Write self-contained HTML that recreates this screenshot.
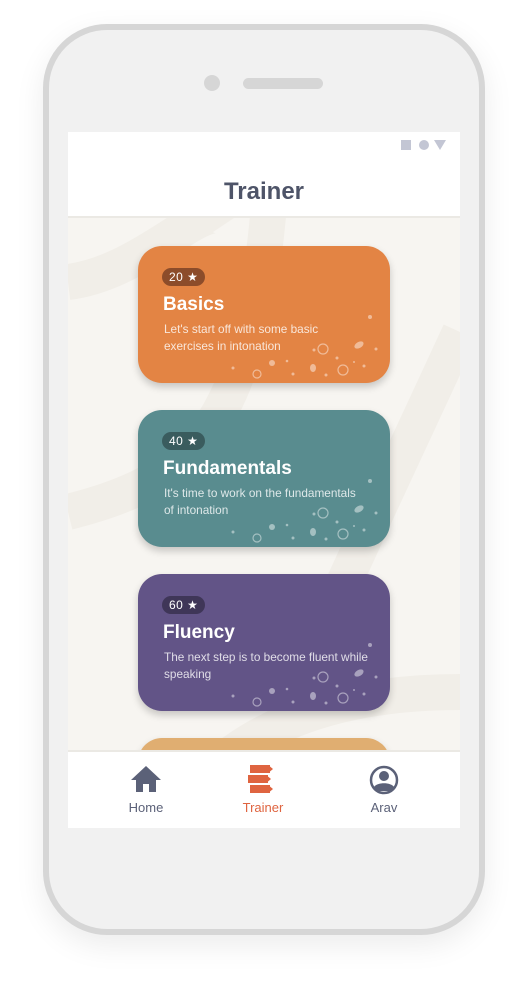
<!DOCTYPE html>
<html><head><style>
body{margin:0;width:528px;height:997px;background:#fff;position:relative;overflow:hidden;font-family:"Liberation Sans",sans-serif}
.phone{position:absolute;left:43px;top:24px;width:430px;height:899px;border:6px solid #d6d6d6;border-radius:64px;background:#f1f1f1;box-shadow:0 10px 30px rgba(0,0,0,.08)}
.cam{position:absolute;left:204px;top:75px;width:16px;height:16px;border-radius:50%;background:#d6d6d6}
.spk{position:absolute;left:243px;top:78px;width:80px;height:11px;border-radius:6px;background:#d6d6d6}
.screen{position:absolute;left:68px;top:132px;width:392px;height:696px;background:#f7f5f1;overflow:hidden}
.hdr{position:absolute;left:0;top:0;width:392px;height:84px;background:#fff;border-bottom:2px solid #ebe9e4}
.hdr h1{margin:0;position:absolute;top:46px;width:100%;text-align:center;font-size:24px;color:#4e5468;font-weight:bold}
.card{position:absolute;left:70px;width:252px;height:137px;border-radius:24px;color:#fff;box-shadow:0 4px 8px rgba(0,0,0,.2);overflow:hidden}
.badge{position:absolute;left:24px;top:22px;height:18px;padding:0 7px;border-radius:9px;font-size:12px;line-height:18px;letter-spacing:.5px}
.card h2{position:absolute;left:25px;top:48px;margin:0;font-size:19px}
.card p{position:absolute;left:26px;top:75px;margin:0;font-size:11.8px;line-height:17px;width:204px;opacity:.8}
.dots{position:absolute;left:79px;top:66px}
.nav{position:absolute;left:0;top:618px;width:392px;height:78px;background:#fff;border-top:2px solid #ebe9e4}
.nav div{position:absolute;top:48px;font-size:13px;width:80px;text-align:center;color:#5b6178}
</style></head><body>
<div class="phone"></div>
<div class="cam"></div><div class="spk"></div>
<div class="screen">
<svg width="392" height="696" style="position:absolute;left:0;top:0"><path d="M0 150 C80 140 140 60 160 90 M200 84 C180 300 120 350 0 380 M392 200 C300 400 250 500 170 696 M100 696 C150 600 260 560 392 560" stroke="#f1eee8" stroke-width="36" fill="none"/></svg>
<div class="hdr"><svg style="position:absolute;left:333px;top:8px" width="50" height="12"><rect x="0" y="0" width="10" height="10" fill="#c3c6d4"/><circle cx="23" cy="5" r="5" fill="#c3c6d4"/><path d="M33 0h12l-6 10z" fill="#c3c6d4"/></svg><h1>Trainer</h1></div>
<svg width="0" height="0" style="position:absolute"><defs><g id="d" fill="rgba(255,255,255,.45)" stroke="rgba(255,255,255,.45)"><circle cx="153" cy="5" r="2" stroke="none"/><circle cx="106" cy="37" r="5" fill="none" stroke-width="1.2"/><ellipse cx="142" cy="33" rx="5" ry="3" transform="rotate(-30 142 33)" stroke="none"/><circle cx="97" cy="38" r="1.5" stroke="none"/><circle cx="159" cy="37" r="1.5" stroke="none"/><circle cx="70" cy="49" r="1.3" stroke="none"/><circle cx="55" cy="51" r="3" stroke="none"/><circle cx="120" cy="46" r="1.5" stroke="none"/><circle cx="137" cy="50" r="1" stroke="none"/><circle cx="147" cy="54" r="1.5" stroke="none"/><circle cx="16" cy="56" r="1.5" stroke="none"/><ellipse cx="96" cy="56" rx="3" ry="4" stroke="none"/><circle cx="126" cy="58" r="5" fill="none" stroke-width="1.2"/><circle cx="40" cy="62" r="4" fill="none" stroke-width="1.2"/><circle cx="76" cy="62" r="1.5" stroke="none"/><circle cx="109" cy="63" r="1.5" stroke="none"/></g></defs></svg>
<div class="card" style="top:114px;background:#e38444"><svg class="dots" width="167" height="70"><use href="#d"/></svg><div class="badge" style="background:#8c4c2a">20 ★</div><h2>Basics</h2><p>Let's start off with some basic exercises in intonation</p></div>
<div class="card" style="top:278px;background:#598c8f"><svg class="dots" width="167" height="70"><use href="#d"/></svg><div class="badge" style="background:#3a5c5e">40 ★</div><h2>Fundamentals</h2><p>It's time to work on the fundamentals of intonation</p></div>
<div class="card" style="top:442px;background:#625487"><svg class="dots" width="167" height="70"><use href="#d"/></svg><div class="badge" style="background:#3f3658">60 ★</div><h2>Fluency</h2><p>The next step is to become fluent while speaking</p></div>
<div class="card" style="top:606px;background:#e0ae71"></div>
<div class="nav">
<svg style="position:absolute;left:62px;top:13px" width="32" height="28"><path d="M16 1L1 15h5v12h7v-8h6v8h7V15h5z" fill="#5b6178"/></svg>
<svg style="position:absolute;left:180px;top:12px" width="28" height="30"><g fill="#df6440"><rect x="2" y="1" width="20" height="8"/><path d="M22 2.5l3 2.5-3 2.5z"/><rect x="0" y="11" width="20" height="8"/><path d="M20 12.5l3 2.5-3 2.5z"/><rect x="2" y="21" width="20" height="8"/><path d="M22 22.5l3 2.5-3 2.5z"/></g></svg>
<svg style="position:absolute;left:301px;top:13px" width="30" height="30"><circle cx="15" cy="15" r="13" fill="none" stroke="#5b6178" stroke-width="2.5"/><circle cx="15" cy="11" r="5" fill="#5b6178"/><path d="M5 22c3-5 17-5 20 0l-4 4H9z" fill="#5b6178"/></svg>
<div style="left:38px">Home</div><div style="left:155px;color:#df6440">Trainer</div><div style="left:276px">Arav</div>
</div>
</div>
</body></html>
